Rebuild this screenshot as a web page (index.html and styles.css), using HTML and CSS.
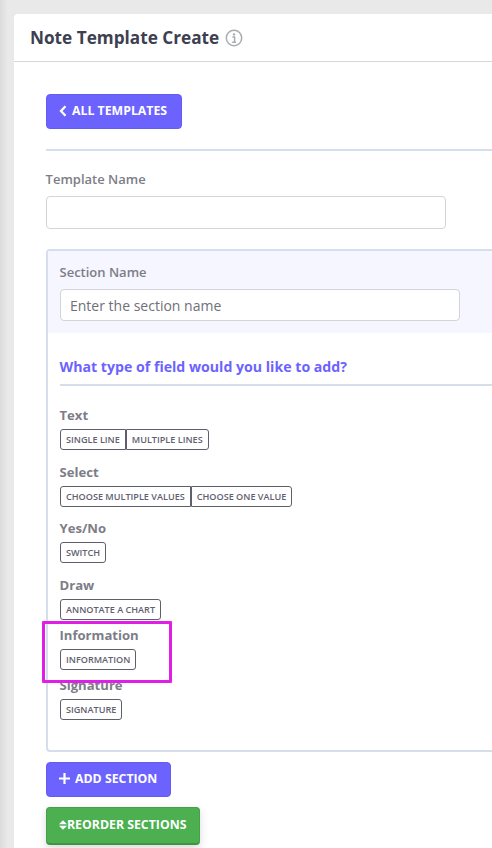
FILE: index.html
```html
<!DOCTYPE html>
<html lang="en">
<head>
<meta charset="utf-8">
<title>Note Template Create</title>
<link rel="stylesheet" href="styles.css">
</head>
<body>
<main class="card">
  <header class="card-head">
    <h1>Note Template Create</h1>
    <svg class="info-icon" viewBox="0 0 18 18" aria-hidden="true"><circle cx="9" cy="9" r="7.7" fill="none" stroke="#a9acb3" stroke-width="1.5"/><circle cx="9" cy="5.4" r="1.2" fill="#a9acb3"/><path d="M7.4 8h2.2v5M7.2 13.2h3.8" fill="none" stroke="#a9acb3" stroke-width="1.5"/></svg>
  </header>
  <div class="card-body">
    <a class="btn btn-purple btn-back"><svg class="ico-chev" viewBox="0 0 8 12" aria-hidden="true"><path d="M6.5 1.2 2 6l4.5 4.8" fill="none" stroke="#fff" stroke-width="2.3"/></svg>ALL TEMPLATES</a>
    <hr class="rule rule-top">
    <label class="field-label">Template Name</label>
    <input class="text-input" type="text">
    <section class="section-box">
      <div class="section-head">
        <label class="field-label">Section Name</label>
        <input class="text-input" type="text" placeholder="Enter the section name">
      </div>
      <div class="section-main">
        <h2>What type of field would you like to add?</h2>
        <hr class="rule rule-field">
        <div class="group">
          <div class="group-title">Text</div>
          <div class="btn-group"><button>SINGLE LINE</button><button>MULTIPLE LINES</button></div>
        </div>
        <div class="group">
          <div class="group-title">Select</div>
          <div class="btn-group"><button>CHOOSE MULTIPLE VALUES</button><button>CHOOSE ONE VALUE</button></div>
        </div>
        <div class="group">
          <div class="group-title">Yes/No</div>
          <div class="btn-group"><button>SWITCH</button></div>
        </div>
        <div class="group group-tight">
          <div class="group-title">Draw</div>
          <div class="btn-group"><button>ANNOTATE A CHART</button></div>
        </div>
        <div class="group group-tight">
          <div class="group-title">Information</div>
          <div class="btn-group"><button>INFORMATION</button></div>
        </div>
        <div class="group group-tight">
          <div class="group-title">Signature</div>
          <div class="btn-group"><button>SIGNATURE</button></div>
        </div>
      </div>
    </section>
    <a class="btn btn-purple btn-add"><svg class="ico-plus" viewBox="0 0 12 12" aria-hidden="true"><path d="M6 0v12M0 6h12" fill="none" stroke="#fff" stroke-width="2.4"/></svg>ADD SECTION</a>
    <a class="btn btn-green"><svg class="ico-sort" viewBox="0 0 10 12" aria-hidden="true"><path d="M5 0 10 5H0zM5 12 0 7h10z" fill="#fff"/></svg>REORDER SECTIONS</a>
  </div>
</main>
<div class="highlight"></div>
</body>
</html>
```

FILE: styles.css
```css
* { box-sizing: border-box; }
html, body { height: 100%; }
body {
  margin: 0;
  overflow: hidden;
  position: relative;
  height: 848px;
  padding: 14px 0 0 14px;
  background: linear-gradient(90deg, #dcdcdc 0, #e9e9e9 8px, #e9e9e9 100%);
  font-family: "Open Sans", sans-serif;
  color: #7a7a85;
}
.card {
  width: 478px;
  height: 834px;
  overflow: hidden;
  background: #fff;
  border-radius: 4px 0 0 0;
}
.card-head {
  height: 48px;
  padding: 0 16px;
  display: flex;
  align-items: center;
  gap: 6px;
  border-bottom: 1px solid #d8d8dc;
}
.card-head h1 {
  margin: 0;
  font-size: 17.2px;
  line-height: 24px;
  font-weight: 700;
  color: #3d4051;
}
.info-icon { width: 18px; height: 18px; margin-top: 1px; }
.card-body { padding: 32px 0 0 32px; }
.btn {
  display: flex;
  width: max-content;
  align-items: center;
  border-radius: 4px;
  color: #fff;
  font-size: 12.3px;
  font-weight: 700;
}
.btn-purple { height: 35px; padding-bottom: 2px; background: #6c63ff; border: 1px solid #655ced; }
.btn-back { padding-left: 12px; padding-right: 14px; gap: 5px; }
.ico-chev { width: 8px; height: 12px; }
.rule { margin: 0; border: 0; height: 2px; background: #d5dfeb; }
.rule-top { margin-top: 20px; }
.field-label {
  display: block;
  font-size: 13px;
  line-height: 18px;
  font-weight: 600;
  color: #7d7d87;
}
.card-body > .field-label { margin-top: 19px; margin-left: -0.4px; }
.text-input {
  display: block;
  width: 400px;
  height: 33px;
  margin-top: 8px;
  padding: 0 9px;
  border: 1px solid #d3d3d8;
  border-radius: 4px;
  background: #fff;
  font: 14px "Open Sans", sans-serif;
  color: #666;
  outline: 0;
}
.text-input::placeholder { color: #6f7079; opacity: 1; }
.section-box {
  margin-top: 20px;
  height: 503px;
  border: 2px solid #d5dfeb;
  border-right: 0;
  border-radius: 4px 0 0 4px;
}
.section-head {
  height: 82px;
  padding: 12px 0 0 12px;
  background: #f5f6ff;
}
.section-head .field-label { margin-left: -0.5px; }
.section-head .text-input { height: 32px; }
.section-main { padding: 0 0 0 12px; }
.section-main h2 {
  margin: 0 0 0 -0.5px;
  padding-top: 24px;
  font-size: 14.15px;
  line-height: 20px;
  font-weight: 700;
  color: #6c63ff;
}
.rule-field { margin: 7px 0 19px; }
.group { margin-bottom: 11.7px; }
.group-tight { margin-bottom: 5px; }
.group-title {
  margin: 0 0 4px -0.5px;
  font-size: 13.1px;
  line-height: 20px;
  font-weight: 700;
  color: #7d7d87;
}
.btn-group { display: flex; }
.btn-group button {
  height: 21px;
  padding: 0 5px;
  background: #fff;
  border: 1px solid #5f5f6b;
  font: 600 9.1px "Open Sans", sans-serif;
  color: #5f6070;
  white-space: nowrap;
}
.btn-group button:first-child { border-radius: 3px 0 0 3px; }
.btn-group button:last-child { border-radius: 0 3px 3px 0; }
.btn-group button:only-child { border-radius: 3px; }
.btn-add { margin-top: 10px; padding-left: 12px; padding-right: 13px; gap: 5px; }
.ico-plus { width: 11px; height: 11px; }
.btn-green {
  margin-top: 10px;
  height: 38px;
  padding: 0 13px 2px 12px;
  background: #4caf50;
  border: 1px solid #469f4a;
  border-bottom: 2px solid #3f9443;
  box-shadow: 0 3px 8px rgba(0, 0, 0, .15);
}
.ico-sort { width: 8px; height: 10px; }
.highlight {
  position: absolute;
  left: 42px;
  top: 621px;
  width: 130px;
  height: 62px;
  border: 3px solid #e01ee6;
  border-radius: 1px;
}
```
